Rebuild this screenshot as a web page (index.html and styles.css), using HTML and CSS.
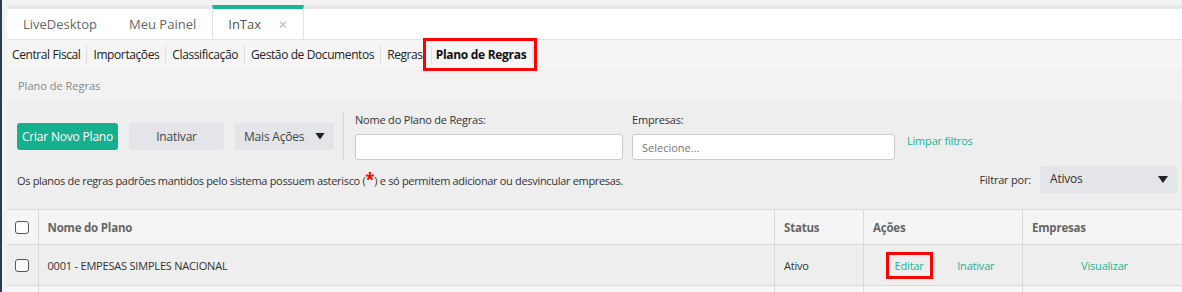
FILE: index.html
```html
<!DOCTYPE html>
<html lang="pt-BR">
<head>
    <meta charset="UTF-8">
    <title>InTax - Plano de Regras</title>
    <link rel="stylesheet" href="styles.css">
</head>
<body>
    <div class="app">
        <nav class="tabs">
            <div class="tab">LiveDesktop</div>
            <div class="tab">Meu Painel</div>
            <div class="tab active">InTax <span class="tab-close">&#x2715;</span></div>
        </nav>
        <ul class="menu">
            <li>Central Fiscal</li>
            <li>Importações</li>
            <li>Classificação</li>
            <li>Gestão de Documentos</li>
            <li>Regras</li>
            <li class="current">Plano de Regras</li>
        </ul>
        <div class="breadcrumb">Plano de Regras</div>

        <section class="panel">
            <div class="toolbar">
                <button class="btn btn-primary">Criar Novo Plano</button>
                <button class="btn">Inativar</button>
                <button class="btn btn-drop">Mais Ações <span class="caret"></span></button>
                <div class="divider"></div>
                <div class="field field-name">
                    <label>Nome do Plano de Regras:</label>
                    <input type="text">
                </div>
                <div class="field field-company">
                    <label>Empresas:</label>
                    <input type="text" placeholder="Selecione...">
                </div>
                <a class="clear-link">Limpar filtros</a>
            </div>
            <div class="info-row">
                <p class="info">Os planos de regras padrões mantidos pelo sistema possuem asterisco (<span class="star">*</span>) e só permitem adicionar ou desvincular empresas.</p>
                <div class="filter">
                    <span>Filtrar por:</span>
                    <div class="select">Ativos <span class="caret"></span></div>
                </div>
            </div>
        </section>

        <table class="grid">
            <thead>
                <tr>
                    <th class="col-check"><span class="check"></span></th>
                    <th>Nome do Plano</th>
                    <th class="col-status">Status</th>
                    <th class="col-actions">Ações</th>
                    <th class="col-company">Empresas</th>
                </tr>
            </thead>
            <tbody>
                <tr>
                    <td class="col-check"><span class="check"></span></td>
                    <td>0001 - EMPESAS SIMPLES NACIONAL</td>
                    <td>Ativo</td>
                    <td class="actions">
                        <a class="edit">Editar</a>
                        <a>Inativar</a>
                    </td>
                    <td class="center"><a>Visualizar</a></td>
                </tr>
                <tr class="empty">
                    <td></td><td></td><td></td><td></td><td></td>
                </tr>
            </tbody>
        </table>
    </div>
</body>
</html>
```

FILE: styles.css
```css
*,*::before,*::after{
    box-sizing: border-box;
    margin: 0;
    padding: 0;
}
body{
    background: #f2f2f2;
    border-left: 2px solid #2c3b4e;
    font-family: "Open Sans", "Liberation Sans", sans-serif;
    color: #333;
    height: 292px;
    overflow: hidden;
}
a{
    color: #1ab394;
    cursor: pointer;
}
.app{
    width: 1185px;
    padding-left: 5px;
}

/* abas */
.tabs{
    margin-top: 5px;
    height: 35px;
    display: flex;
    background: #fff;
    border-top: 4px solid #e6e9ec;
    border-bottom: 1px solid #e3e3e3;
}
.tab{
    padding: 0 16px;
    font-size: 13px;
    line-height: 30px;
    color: #666;
}
.tab.active{
    margin-top: -4px;
    line-height: 30px;
    border-top: 4px solid #1ab394;
    border-left: 1px solid #e3e3e3;
    border-right: 1px solid #e3e3e3;
    color: #555;
    padding: 0 15px 0 15px;
}
.tab-close{
    margin-left: 14px;
    font-size: 12px;
    color: #bbb;
}

/* menu */
.menu{
    list-style: none;
    display: flex;
    align-items: center;
    height: 30px;
    background: #f5f5f5;
}
.menu li{
    font-size: 12px;
    letter-spacing: -0.4px;
    line-height: 18px;
    padding: 0 6px;
    border-right: 1px solid #ddd;
    color: #222;
}
.menu li:first-child{
    padding-left: 5px;
}
.menu li:nth-child(5){
    border-right: none;
}
.menu li.current{
    position: relative;
    font-weight: 700;
    letter-spacing: -0.3px;
    color: #111;
    margin-left: 2px;
    padding: 0 6px 0 4px;
    border-left: 1px solid #ddd;
}
.menu li.current::after{
    content: "";
    position: absolute;
    left: -9px;
    right: -5px;
    top: -8px;
    bottom: -7px;
    border: 3px solid #f00;
}

.breadcrumb{
    height: 31px;
    line-height: 31px;
    padding-left: 11px;
    font-size: 11px;
    color: #888;
}

/* painel de filtros */
.panel{
    background: #eee;
    padding: 11px 10px 16px;
}
.toolbar{
    display: flex;
    align-items: center;
    height: 48px;
}
.btn{
    height: 27px;
    border: none;
    border-radius: 3px;
    background: #e3e5e9;
    color: #444;
    font-family: inherit;
    font-size: 12px;
    letter-spacing: -0.2px;
    margin-right: 11px;
}
.btn-primary{
    width: 101px;
    background: #17b08f;
    color: #fff;
}
.btn:nth-child(2){
    width: 95px;
}
.btn-drop{
    width: 99px;
    margin-right: 9px;
    display: flex;
    align-items: center;
    justify-content: space-between;
    padding: 0 9px 0 9px;
}
.caret{
    width: 10px;
    height: 7px;
    background: #222;
    clip-path: polygon(0 0, 100% 0, 50% 100%);
}
.divider{
    width: 1px;
    align-self: stretch;
    background: #d8d8d8;
    margin-right: 11px;
}
.field{
    display: flex;
    flex-direction: column;
    margin-right: 9px;
}
.field label{
    font-size: 11px;
    letter-spacing: -0.2px;
    line-height: 16px;
    margin-bottom: 6px;
    color: #333;
}
.field input{
    height: 26px;
    border: 1px solid #ccc;
    border-radius: 3px;
    background: #fff;
    padding: 0 9px;
    font-family: inherit;
    font-size: 11px;
    outline: none;
}
.field input::placeholder{
    color: #777;
}
.field-name{
    width: 268px;
}
.field-company{
    width: 263px;
}
.clear-link{
    font-size: 11px;
    letter-spacing: -0.2px;
    margin-left: 3px;
    margin-top: 9px;
}

.info-row{
    display: flex;
    align-items: center;
    justify-content: space-between;
    margin-top: 6px;
}
.info{
    font-size: 11px;
    letter-spacing: -0.32px;
    color: #333;
    padding-top: 2px;
}
.star{
    color: #f00;
    font-size: 17px;
    font-weight: 700;
    line-height: 0;
    vertical-align: -1px;
}
.filter{
    display: flex;
    align-items: center;
    gap: 9px;
    font-size: 11px;
    letter-spacing: -0.2px;
}
.select{
    width: 137px;
    height: 27px;
    background: #e3e5e9;
    border-radius: 3px;
    display: flex;
    align-items: center;
    justify-content: space-between;
    padding: 0 9px 2px 10px;
    font-size: 12px;
}
.select .caret{
    margin-top: 2px;
}

/* tabela */
.grid{
    width: 100%;
    border-collapse: collapse;
    table-layout: fixed;
    font-size: 11px;
    letter-spacing: -0.2px;
}
.grid th,
.grid td{
    border: 1px solid #dadada;
    border-top: none;
    text-align: left;
    padding: 0 9px;
}
.grid th:first-child,
.grid td:first-child{
    border-left: none;
}
.grid thead tr{
    background: #f5f5f5;
    height: 35px;
    border-top: 1px solid #dadada;
}
.grid th{
    color: #666;
    font-weight: 700;
    font-size: 11.5px;
}
.grid tbody tr{
    background: #eee;
    height: 41px;
}
.grid tbody tr.empty{
    background: #f6f6f6;
    height: 10px;
}
.col-check{
    width: 31px;
}
.col-status{
    width: 89px;
}
.col-actions{
    width: 159px;
}
.col-company{
    width: 164px;
}
.check{
    display: block;
    width: 14px;
    height: 13px;
    border: 1.5px solid #555;
    border-radius: 3px;
    background: #fff;
    margin-left: -1px;
}
.grid td.actions{
    text-align: center;
    padding-right: 15px;
}
.actions a + a{
    margin-left: 22px;
}
.edit{
    display: inline-block;
    padding: 2px 6px;
    border: 3px solid #f00;
    line-height: 17px;
}
.grid td.center{
    text-align: center;
}
```
